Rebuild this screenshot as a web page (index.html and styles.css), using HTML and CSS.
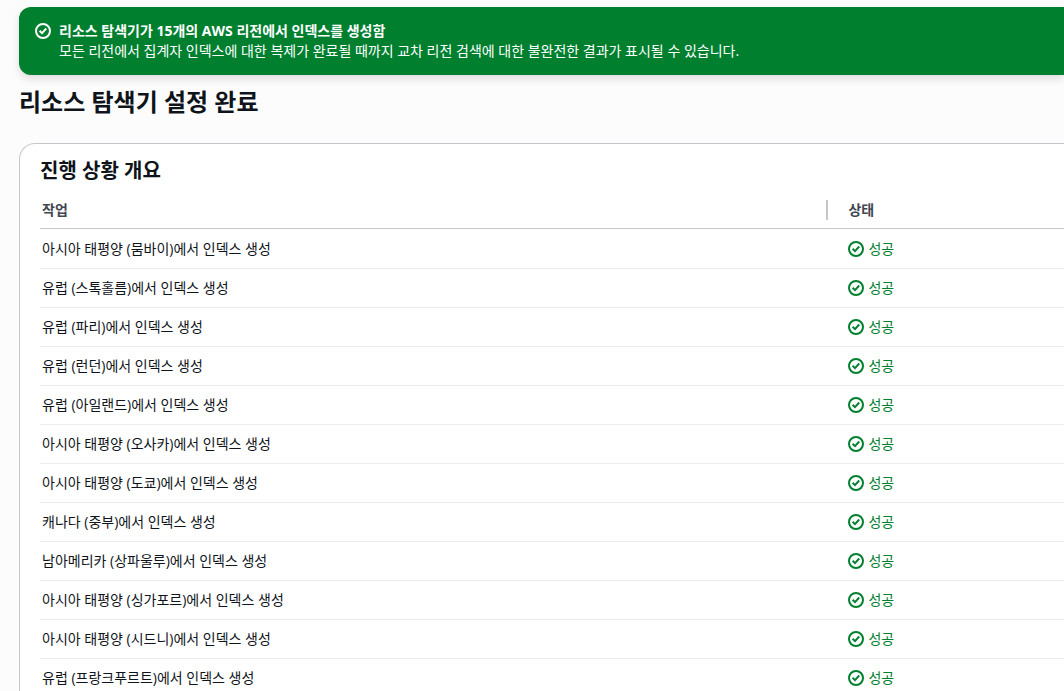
FILE: index.html
```html
<!DOCTYPE html>
<html lang="ko">
<head>
    <meta charset="UTF-8">
    <meta name="viewport" content="width=device-width, initial-scale=1.0">
    <title>리소스 탐색기 설정 완료</title>
    <link rel="stylesheet" href="styles.css">
</head>
<body>
    <svg class="sprite" aria-hidden="true">
        <symbol id="check" viewBox="0 0 16 16">
            <circle cx="8" cy="8" r="7"/>
            <path d="M4.6 7.7 7 10.1l4.2-4.6"/>
        </symbol>
    </svg>

    <div class="flash" role="status">
        <svg class="icon"><use href="#check"/></svg>
        <div class="flash-text">
            <strong>리소스 탐색기가 15개의 AWS 리전에서 인덱스를 생성함</strong>
            <p>모든 리전에서 집계자 인덱스에 대한 복제가 완료될 때까지 교차 리전 검색에 대한 불완전한 결과가 표시될 수 있습니다.</p>
        </div>
    </div>

    <main>
        <h1>리소스 탐색기 설정 완료</h1>
        <section class="card">
            <h2>진행 상황 개요</h2>
            <table>
                <thead>
                    <tr>
                        <th class="task" scope="col"><div class="head-cell">작업</div></th>
                        <th scope="col">상태</th>
                    </tr>
                </thead>
                <tbody>
                    <tr>
                        <td>아시아 태평양 (뭄바이)에서 인덱스 생성</td>
                        <td><span class="status"><svg class="icon"><use href="#check"/></svg>성공</span></td>
                    </tr>
                    <tr>
                        <td>유럽 (스톡홀름)에서 인덱스 생성</td>
                        <td><span class="status"><svg class="icon"><use href="#check"/></svg>성공</span></td>
                    </tr>
                    <tr>
                        <td>유럽 (파리)에서 인덱스 생성</td>
                        <td><span class="status"><svg class="icon"><use href="#check"/></svg>성공</span></td>
                    </tr>
                    <tr>
                        <td>유럽 (런던)에서 인덱스 생성</td>
                        <td><span class="status"><svg class="icon"><use href="#check"/></svg>성공</span></td>
                    </tr>
                    <tr>
                        <td>유럽 (아일랜드)에서 인덱스 생성</td>
                        <td><span class="status"><svg class="icon"><use href="#check"/></svg>성공</span></td>
                    </tr>
                    <tr>
                        <td>아시아 태평양 (오사카)에서 인덱스 생성</td>
                        <td><span class="status"><svg class="icon"><use href="#check"/></svg>성공</span></td>
                    </tr>
                    <tr>
                        <td>아시아 태평양 (도쿄)에서 인덱스 생성</td>
                        <td><span class="status"><svg class="icon"><use href="#check"/></svg>성공</span></td>
                    </tr>
                    <tr>
                        <td>캐나다 (중부)에서 인덱스 생성</td>
                        <td><span class="status"><svg class="icon"><use href="#check"/></svg>성공</span></td>
                    </tr>
                    <tr>
                        <td>남아메리카 (상파울루)에서 인덱스 생성</td>
                        <td><span class="status"><svg class="icon"><use href="#check"/></svg>성공</span></td>
                    </tr>
                    <tr>
                        <td>아시아 태평양 (싱가포르)에서 인덱스 생성</td>
                        <td><span class="status"><svg class="icon"><use href="#check"/></svg>성공</span></td>
                    </tr>
                    <tr>
                        <td>아시아 태평양 (시드니)에서 인덱스 생성</td>
                        <td><span class="status"><svg class="icon"><use href="#check"/></svg>성공</span></td>
                    </tr>
                    <tr>
                        <td>유럽 (프랑크푸르트)에서 인덱스 생성</td>
                        <td><span class="status"><svg class="icon"><use href="#check"/></svg>성공</span></td>
                    </tr>
                </tbody>
            </table>
        </section>
    </main>
</body>
</html>
```
FILE: styles.css
```css
* {
    box-sizing: border-box;
    margin: 0;
    padding: 0;
}

body {
    padding: 7px 0 0 19px;
    font-family: "Open Sans", "Noto Sans CJK KR", sans-serif;
    font-size: 14px;
    line-height: 20px;
    background-color: #fcfcfc;
    color: #0f141a;
}

.sprite {
    display: none;
}

.icon {
    flex: none;
    width: 16px;
    height: 16px;
    fill: none;
    stroke: currentColor;
    stroke-width: 2;
}

.flash {
    display: flex;
    gap: 8px;
    padding: 14px 16px;
    background-color: #00802f;
    color: #fff;
    border-radius: 12px 0 0 12px;
    box-shadow: 0 4px 8px rgba(0, 7, 22, 0.12);
}

.flash .icon {
    margin-top: 2px;
}

.flash strong {
    display: block;
}

h1 {
    margin: 12px 0 26px;
    font-size: 24px;
    line-height: 30px;
}

.card {
    padding: 15px 0 0 20px;
    background-color: #fff;
    border: 1px solid #c6c6cd;
    border-width: 1px 0 0 1px;
    border-radius: 16px 0 0 0;
}

h2 {
    font-size: 20px;
    line-height: 24px;
}

table {
    width: 100%;
    margin-top: 8px;
    table-layout: fixed;
    border-collapse: separate;
    border-spacing: 0;
}

th, td {
    padding: 9px 20px 9px 2px;
    text-align: left;
    border-bottom: 1px solid #ebebf0;
}

th {
    padding-bottom: 8px;
    color: #424650;
    border-color: #c6c6cd;
}

th + th, td + td {
    padding-left: 20px;
}

tbody tr:first-child td {
    padding-top: 10px;
}

.task {
    width: 77%;
    padding-right: 0;
}

.head-cell {
    border-right: 2px solid #c6c6cd;
}

.status {
    display: flex;
    align-items: center;
    gap: 4px;
    color: #00802f;
}
```
